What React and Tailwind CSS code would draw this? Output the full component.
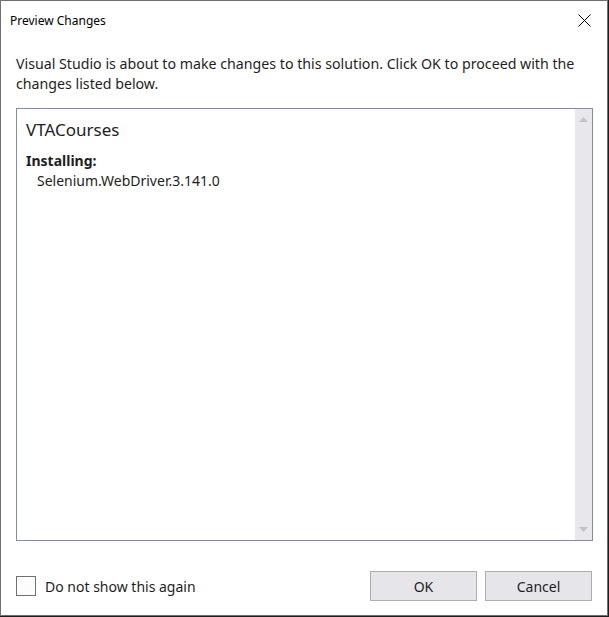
import React, { useState } from 'react';

const font = { fontFamily: '"Noto Sans", "Open Sans", sans-serif' };

const App = () => {
    const [dontShow, setDontShow] = useState(false);

    return (
        <div className="w-[609px] h-[617px] bg-[#1e1e1e]" style={font}>
            <div className="w-[608px] h-[616px] bg-white border border-[#707070] flex flex-col text-[#1e1e1e]">
                {/* Title bar */}
                <div className="h-[39px] flex items-center justify-between pl-[9px] pr-[16px]">
                    <span className="text-[12px] text-black">Preview Changes</span>
                    <svg width="13" height="13" viewBox="0 0 13 13" className="text-black">
                        <path d="M0.5 0.5 L12.5 12.5 M12.5 0.5 L0.5 12.5" stroke="currentColor" strokeWidth="1" />
                    </svg>
                </div>

                <div className="flex-1 flex flex-col px-[15px]">
                    <p className="text-[14.2px] leading-[20px] mt-[14px] text-[#1e1e1e]">
                        Visual Studio is about to make changes to this solution. Click OK to proceed with the changes listed below.
                    </p>

                    {/* Changes list */}
                    <div className="mt-[14px] h-[433px] w-[577px] border border-[#828fa3] flex">
                        <div className="flex-1 pl-[9px] pt-[10px]">
                            <div className="text-[17px] leading-[22px]">VTACourses</div>
                            <div className="text-[14px] leading-[20px] font-bold mt-[10px]">Installing:</div>
                            <div className="text-[14px] leading-[20px] pl-[11px]">Selenium.WebDriver.3.141.0</div>
                        </div>
                        <div className="w-[17px] bg-[#e8e8ec] flex flex-col justify-between items-center py-[8px]">
                            <svg width="9" height="5" viewBox="0 0 9 5">
                                <path d="M0 5 L4.5 0 L9 5 Z" fill="#c2c3c9" />
                            </svg>
                            <svg width="9" height="5" viewBox="0 0 9 5">
                                <path d="M0 0 L9 0 L4.5 5 Z" fill="#c2c3c9" />
                            </svg>
                        </div>
                    </div>

                    {/* Footer */}
                    <div className="flex items-center justify-between mt-[30px]">
                        <label className="flex items-center gap-[9px] cursor-pointer">
                            <span
                                onClick={() => setDontShow(!dontShow)}
                                className="w-[20px] h-[20px] border border-[#717171] bg-[#fcfcfc] flex items-center justify-center text-[12px]"
                            >
                                {dontShow ? '✓' : ''}
                            </span>
                            <span className="text-[14px]">Do not show this again</span>
                        </label>
                        <div className="flex gap-[8px]">
                            <button className="w-[107px] h-[30px] bg-[#e6e6ea] border border-[#adadad] text-[14px]">OK</button>
                            <button className="w-[107px] h-[30px] bg-[#e6e6ea] border border-[#adadad] text-[14px]">Cancel</button>
                        </div>
                    </div>
                </div>
            </div>
        </div>
    );
};

export default App;
